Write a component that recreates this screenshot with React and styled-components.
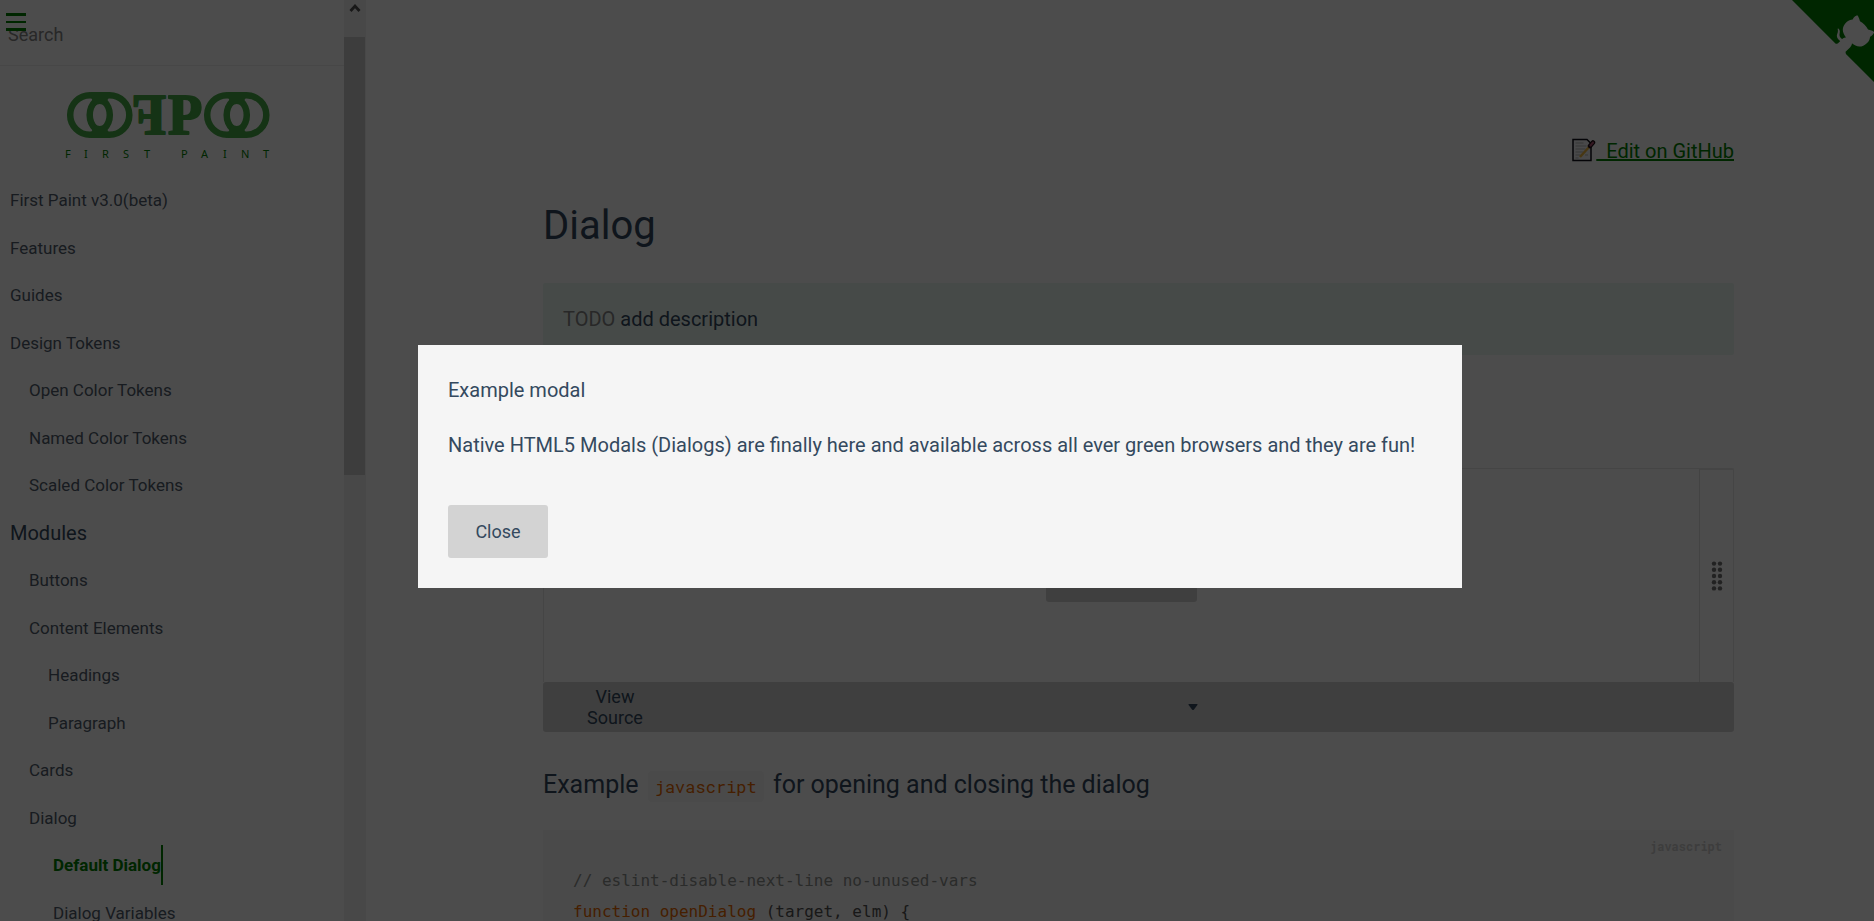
import React from "react";
import styled, { createGlobalStyle } from "styled-components";

const sans = `Roboto, "Liberation Sans", sans-serif`;
const mono = `"Roboto Mono", "Liberation Mono", monospace`;

const GlobalStyle = createGlobalStyle`
  * { box-sizing: border-box; }
  body { margin: 0; background: #fff; color: #34495e; font-family: ${sans}; font-size: 20px; overflow: hidden; }
  h1, h2, p, ul, pre { margin: 0; padding: 0; font-weight: 400; }
  button, input { font-family: inherit; color: inherit; border: 0; }
`;

const Page = styled.div`
  display: flex;
  height: 100vh;
  overflow: hidden;
`;

const Sidebar = styled.aside`
  display: flex;
  flex: 0 0 366px;
  overflow: hidden;
`;

const SidebarBody = styled.div`
  flex: 1;
  min-width: 0;
`;

const MenuButton = styled.button`
  position: fixed;
  top: 13px;
  left: 6px;
  width: 20px;
  height: 18px;
  padding: 0;
  background: none;
  display: flex;
  flex-direction: column;
  justify-content: space-between;
`;

const MenuBar = styled.span`
  width: 100%;
  height: ${(p) => (p.$thin ? 2 : 3)}px;
  background: #008000;
`;

const SearchBox = styled.div`
  height: 66px;
  padding: 16px 8px 0;
  border-bottom: 1px solid #eee;
`;

const SearchInput = styled.input`
  width: 100%;
  height: 36px;
  padding: 0;
  background: none;
  font-size: 18px;
  &::placeholder { color: #858585; opacity: 1; }
`;

const LogoLink = styled.a`
  display: block;
  height: 110px;
  padding: 24px 0 0 64px;
`;

const NavList = styled.ul`
  list-style: none;
  display: grid;
  grid-auto-rows: 48px 47px;
  align-items: center;
  padding-left: 10px;
`;

const indents = [0, 19, 38, 43];

const NavItem = styled.li`
  padding-left: ${(p) => indents[p.$depth]}px;
  font-size: ${(p) => (p.$section ? 20 : 17)}px;
  color: ${(p) => (p.$section ? "#34495e" : "#505d6b")};
`;

const NavLink = styled.a`
  display: inline-block;
  line-height: 40px;
  text-decoration: none;
  color: ${(p) => (p.$active ? "#008000" : "inherit")};
  font-weight: ${(p) => (p.$active ? 700 : 400)};
  border-right: ${(p) => (p.$active ? "2px solid #008000" : "0")};
`;

const ScrollTrack = styled.div`
  flex: 0 0 22px;
  background: #f1f1f1;
  padding-right: 1px;
`;

const ScrollArrow = styled.div`
  display: flex;
  justify-content: center;
  align-items: flex-start;
  height: 37px;
  padding-top: 3px;
`;

const ScrollThumb = styled.div`
  height: 438px;
  background: #cdcdcd;
`;

const Main = styled.main`
  flex: 1;
  min-width: 0;
  padding: 136px 140px 0 177px;
`;

const Corner = styled.a`
  position: fixed;
  top: 0;
  right: 0;
  width: 82px;
  height: 95px;
  overflow: hidden;
  color: #fff;
`;

const EditRow = styled.p`
  line-height: 30px;
  text-align: right;
`;

const EditLink = styled.a`
  color: #008000;
`;

const MemoIcon = styled.svg`
  vertical-align: -4px;
`;

const Title = styled.h1`
  margin-top: 35px;
  font-size: 40px;
  line-height: 50px;
`;

const Callout = styled.p`
  margin-top: 32px;
  padding: 20px;
  line-height: 32px;
  border-radius: 2px;
  background: rgba(66, 185, 131, 0.1);
`;

const Muted = styled.span`
  color: #858585;
`;

const Demo = styled.section`
  display: flex;
  margin-top: 113px;
  height: 214px;
  border: 1px solid #e6e6e6;
  border-bottom: 0;
  border-radius: 2px 2px 0 0;
`;

const DemoStage = styled.div`
  flex: 1;
  display: flex;
  align-items: center;
  justify-content: center;
`;

const DemoHandle = styled.div`
  flex: 0 0 34px;
  display: flex;
  align-items: center;
  justify-content: center;
  border-left: 1px solid #e0e0e0;
  border-top: 1px solid #e6e6e6;
`;

const Button = styled.button`
  height: 53px;
  min-width: ${(p) => p.$width}px;
  padding: 0 27px;
  border-radius: 3px;
  background: #d3d3d3;
  font-size: 18px;
`;

const SourceToggle = styled.button`
  display: flex;
  align-items: center;
  gap: 20px;
  width: 100%;
  height: 50px;
  padding: 0 28px;
  border-radius: 3px;
  background: #d3d3d3;
  font-size: 18px;
  line-height: 21px;
`;

const SourceLabel = styled.span`
  flex: 0 0 88px;
  padding: 0 12px;
  text-align: center;
`;

const SourceArrow = styled.span`
  flex: 1;
  display: flex;
  justify-content: center;
`;

const Subtitle = styled.h2`
  margin-top: 35px;
  font-size: 25px;
  line-height: 36px;
`;

const InlineCode = styled.code`
  margin: 0 3px;
  padding: 4px 7px;
  border-radius: 4px;
  background: #f8f8f8;
  color: #e96900;
  font-family: ${mono};
  font-size: 17px;
`;

const CodeBlock = styled.pre`
  position: relative;
  margin-top: 25px;
  padding: 35px 30px;
  background: #f8f8f8;
  color: #525252;
  font-family: ${mono};
  font-size: 16px;
  line-height: 30px;
`;

const CodeLang = styled.span`
  position: absolute;
  top: 7px;
  right: 12px;
  font-size: 12px;
  font-weight: 700;
  line-height: 18px;
  color: #ccc;
`;

const Comment = styled.span`
  color: #8e908c;
`;

const Keyword = styled.span`
  color: #e96900;
`;

const Backdrop = styled.div`
  position: fixed;
  inset: 0;
  display: flex;
  align-items: center;
  justify-content: center;
  padding: 12px 0 0 6px;
  background: rgba(0, 0, 0, 0.7);
`;

const Modal = styled.dialog`
  position: static;
  flex: 0 1 1044px;
  margin: 0;
  padding: 30px;
  border: 0;
  background: #f5f5f5;
  color: #34495e;
`;

const ModalTitle = styled.p`
  line-height: 30px;
`;

const ModalText = styled.p`
  margin: 24px 0 44px;
  line-height: 32px;
`;

const items = [
  ["First Paint v3.0(beta)", 0],
  ["Features", 0],
  ["Guides", 0],
  ["Design Tokens", 0],
  ["Open Color Tokens", 1],
  ["Named Color Tokens", 1],
  ["Scaled Color Tokens", 1],
  ["Modules", 0, "section"],
  ["Buttons", 1],
  ["Content Elements", 1],
  ["Headings", 2],
  ["Paragraph", 2],
  ["Cards", 1],
  ["Dialog", 1],
  ["Default Dialog", 3, "active"],
  ["Dialog Variables", 3],
];

const tagline = [
  ["F", 1], ["I", 20], ["R", 38], ["S", 59], ["T", 80],
  ["P", 117], ["A", 137], ["I", 159], ["N", 177], ["T", 199],
];

function Rings({ x }) {
  return (
    <g transform={`translate(${x} 0)`}>
      <g fill="none" stroke="#46aa46" strokeWidth="6.5">
        <circle cx="26" cy="25" r="19.8" />
        <circle cx="45.500" cy="25" r="19.8" />
      </g>
      <path fill="#46aa46" d="M27 2h18v5l-4.500 9q-4.700-4-9.500 0L27 7zM27 48h18v-5l-4.500-9q-4.700 4-9.500 0L27 43z" />
    </g>
  );
}

function Logo() {
  return (
    <svg width="210" height="72" viewBox="0 0 210 72" role="img" aria-label="First Paint">
      <Rings x={0} />
      <Rings x={137} />
      <g
        fill="#46aa46" stroke="#46aa46" strokeWidth="2" strokeLinejoin="round"
        fontFamily='"Liberation Serif", serif' fontWeight="700" fontSize="56"
      >
        <text x="-102" y="44" transform="scale(-1 1)">F</text>
        <text x="104" y="44">P</text>
      </g>
      <g fill="#008000" fontFamily='"Noto Sans", sans-serif' fontSize="11">
        {tagline.map(([letter, x]) => (
          <text key={x} x={x} y="68">{letter}</text>
        ))}
      </g>
    </svg>
  );
}

function GithubCorner() {
  return (
    <svg width="95" height="95" viewBox="0 0 250 250" aria-hidden="true">
      <path fill="#008000" d="M0 0l115 115h15l12 27 108 108V0z" />
      <path fill="currentColor" d="M128.3 109c-14.5-9.300-9.300-19.400-9.300-19.400 3-6.900 1.500-11 1.500-11-1.300-6.600 2.900-2.300 2.900-2.300 3.900 4.600 2.100 11 2.100 11-2.600 10.300 5.100 14.600 8.900 15.900" />
      <path fill="currentColor" d="M115 115c-.1.100 3.700 1.500 4.800.4l13.900-13.800c3.200-2.400 6.200-3.200 8.500-3-8.400-10.600-14.700-24.200 1.600-40.600 4.700-4.600 10.200-6.800 15.900-7 .6-1.600 3.500-7.400 11.700-10.900 0 0 4.700 2.400 7.400 16.100 4.300 2.400 8.400 5.600 12.100 9.200 3.600 3.600 6.800 7.800 9.200 12.200 13.700 2.600 16.200 7.300 16.200 7.300-3.600 8.200-9.400 11.100-10.900 11.700-.3 5.800-2.400 11.200-7.100 15.900-16.400 16.400-30 10-40.600 1.600.2 2.800-1 6.800-5 10.800L141 136.500c-1.200 1.200.6 5.400.8 5.300z" />
    </svg>
  );
}

function Memo() {
  return (
    <MemoIcon width="25" height="24" viewBox="0 0 25 24" aria-hidden="true">
      <path d="M2 1.500h14l4 4v17H2z" fill="#f4f6f8" stroke="#101018" strokeWidth="1.500" />
      <path d="M4.500 5h8M4.500 8h11M4.500 11h10M4.500 14h8M4.500 17h5M4.500 20h3M14 17h3" stroke="#b5b5b5" />
      <path d="M9 19l10-11" stroke="#f0b840" strokeWidth="2.500" />
      <path d="M19 8l3-3.500" stroke="#201018" strokeWidth="4.500" strokeLinecap="round" />
      <path d="M19.500 7.500l2.500-3" stroke="#b05070" strokeWidth="2" strokeLinecap="round" />
    </MemoIcon>
  );
}

function Dots() {
  return (
    <svg width="12" height="30" viewBox="0 0 12 30" aria-hidden="true" fill="#737373">
      {[0, 1, 2, 3, 4].map((row) => (
        <g key={row}>
          <circle cx="3" cy={2.6 + row * 6.2} r="2.200" />
          <circle cx="9" cy={2.6 + row * 6.2} r="2.200" />
        </g>
      ))}
    </svg>
  );
}

export default function App() {
  return (
    <>
      <GlobalStyle />
      <Page>
        <Sidebar>
          <SidebarBody>
            <SearchBox>
              <SearchInput type="search" placeholder="Search" aria-label="Search" />
            </SearchBox>
            <LogoLink href="#/"><Logo /></LogoLink>
            <nav>
              <NavList>
                {items.map(([label, depth, kind]) => (
                  <NavItem key={label} $depth={depth} $section={kind === "section"}>
                    {kind === "section" ? label : (
                      <NavLink href="#/" $active={kind === "active"}>{label}</NavLink>
                    )}
                  </NavItem>
                ))}
              </NavList>
            </nav>
          </SidebarBody>
          <ScrollTrack>
            <ScrollArrow>
              <svg width="12" height="10" viewBox="0 0 12 10" aria-hidden="true">
                <path d="M1.500 8L6 3l4.500 5" fill="none" stroke="#505050" strokeWidth="2.800" />
              </svg>
            </ScrollArrow>
            <ScrollThumb />
          </ScrollTrack>
        </Sidebar>
        <MenuButton aria-label="Menu">
          <MenuBar /><MenuBar $thin /><MenuBar />
        </MenuButton>

        <Main>
          <EditRow>
            <EditLink href="#/"><Memo />&nbsp; Edit on GitHub</EditLink>
          </EditRow>
          <Title>Dialog</Title>
          <Callout><Muted>TODO</Muted> add description</Callout>
          <Demo>
            <DemoStage><Button $width={151} aria-label="Open dialog" /></DemoStage>
            <DemoHandle><Dots /></DemoHandle>
          </Demo>
          <SourceToggle>
            <SourceLabel>View Source</SourceLabel>
            <SourceArrow>
              <svg width="10" height="6" viewBox="0 0 10 6" aria-hidden="true">
                <path d="M1 0h8q1 0 .4 1L6 5.500q-1 1-2 0L.6 1Q0 0 1 0z" fill="#34495e" />
              </svg>
            </SourceArrow>
          </SourceToggle>
          <Subtitle>
            Example <InlineCode>javascript</InlineCode> for opening and closing the dialog
          </Subtitle>
          <CodeBlock>
            <CodeLang>javascript</CodeLang>
            <code>
              <Comment>// eslint-disable-next-line no-unused-vars</Comment>{"\n"}
              <Keyword>function</Keyword> <Keyword>openDialog</Keyword> (target, elm) {"{"}
            </code>
          </CodeBlock>
        </Main>
      </Page>

      <Corner href="#/" aria-label="View source on GitHub"><GithubCorner /></Corner>

      <Backdrop>
        <Modal open aria-labelledby="modal-title">
          <ModalTitle id="modal-title">Example modal</ModalTitle>
          <ModalText>
            Native HTML5 Modals (Dialogs) are finally here and available across all ever green browsers and they are fun!
          </ModalText>
          <Button $width={100}>Close</Button>
        </Modal>
      </Backdrop>
    </>
  );
}
